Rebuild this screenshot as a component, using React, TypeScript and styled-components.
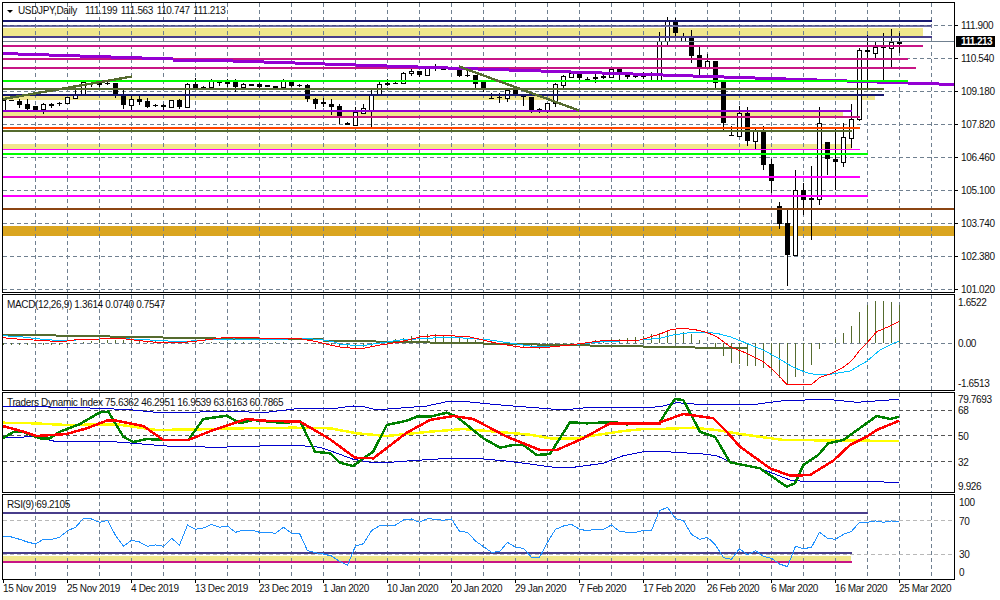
import styled, { createGlobalStyle } from "styled-components";

const GlobalStyle = createGlobalStyle`
    html, body {
        margin: 0;
        background: #fff;
    }
    body {
        font-family: "Liberation Sans", Arial, sans-serif;
        overflow: hidden;
    }
`

const Terminal = styled.div`
    width: 1000px;
    height: 600px;
    padding: 2px 0 0 2px;
    box-sizing: border-box;
    display: flex;
    flex-direction: column;
    gap: 1px;
    background: #fff;
    color: #111;
    font-size: 10px;
    letter-spacing: -0.35px;
    line-height: 12px;
`

const PaneRow = styled.div<{ $height: number }>`
    display: flex;
    height: ${props => props.$height}px;
`

const Plot = styled.div`
    position: relative;
    width: 953px;
    height: 100%;
    box-sizing: border-box;
    border: 1px solid #000;
    flex: none;
    overflow: hidden;

    svg {
        display: block;
    }
`

const PaneTitle = styled.div<{ $top?: number; $left?: number }>`
    position: absolute;
    top: ${props => props.$top ?? 4}px;
    left: ${props => props.$left ?? 4}px;
    display: flex;
    align-items: center;
    white-space: pre;
`

const MenuArrow = styled.span`
    width: 0;
    height: 0;
    margin: 1px 5px 0 1px;
    border-left: 3px solid transparent;
    border-right: 3px solid transparent;
    border-top: 3px solid #000;
`

const SymbolName = styled.span`
    margin-right: 8px;
`

const QuoteValues = styled.span`
    word-spacing: 1.2px;
`

const AxisColumn = styled.div<{ $top: number; $inset: number; $gap?: number }>`
    position: relative;
    flex: 1;
    display: flex;
    flex-direction: column;
    gap: ${props => props.$gap ?? 0}px;
    padding-top: ${props => props.$top}px;
    padding-left: ${props => props.$inset}px;
`

const AxisLabel = styled.div<{ $mt?: number; $tick?: boolean }>`
    position: relative;
    height: 12px;
    flex: none;
    margin-top: ${props => props.$mt ?? 0}px;

    &::before {
        content: "";
        display: ${props => (props.$tick ? "block" : "none")};
        position: absolute;
        left: -6px;
        top: 5px;
        width: 3px;
        height: 1px;
        background: #000;
    }
`

const PriceTag = styled.div`
    position: absolute;
    top: 34px;
    left: 1px;
    width: 34px;
    height: 11px;
    padding-left: 5px;
    background: #000;
    color: #fff;
    line-height: 11px;
    font-weight: 700;
    letter-spacing: -0.6px;
`

const DateAxis = styled.div`
    display: grid;
    grid-template-columns: repeat(15, 64px);
    padding-left: 1px;
    margin-top: -1px;
    height: 20px;
`

const DateCell = styled.div`
    position: relative;
    padding-top: 3px;
    white-space: nowrap;

    &::before {
        content: "";
        position: absolute;
        left: 0;
        top: 0;
        width: 1px;
        height: 3px;
        background: #000;
    }
`

type Pt = [number, number];

const GRID = "#708090";
const NAVY = "#191970";
const SLATE = "#483D8B";
const VIOLET = "#C71585";
const PURPLE = "#9400D3";
const OLIVE = "#556B2F";
const LIME = "#00FF00";
const ORANGE = "#FF4500";
const MAGENTA = "#FF00FF";
const BROWN = "#8B4513";
const GOLD = "#DAA520";
const KHAKI = "#F0E68C";

const vGrid = Array.from({ length: 29 }, (_, i) => 35 + i * 32);

// reads points taken off 3x crops back into page coordinates
const fromCrop = (pts: number[], ox: number, oy: number): Pt[] => {
    const out: Pt[] = [];
    for (let i = 0; i < pts.length; i += 2) out.push([ox + pts[i] / 3, oy + pts[i + 1] / 3]);
    return out;
};

const toPoints = (pts: Pt[]) => pts.map(p => `${p[0].toFixed(1)},${p[1].toFixed(1)}`).join(" ");

const threeCrops = (a: number[], b: number[], c: number[]) => [
    ...fromCrop(a, 0, 390),
    ...fromCrop(b, 330, 390),
    ...fromCrop(c, 660, 390),
];

// high, body top, body bottom, low, up
const candles: [number, number, number, number, number][] = [
    [100, 100, 110, 110, 1], [100, 100, 101, 101, 0], [99, 101, 105, 108, 0], [99, 104, 109, 110, 0],
    [106, 106, 110, 110, 0], [103, 104, 109, 114, 1], [103, 104, 106, 108, 0], [102, 103, 104, 106, 0],
    [97, 97, 103, 104, 1], [90, 95, 98, 99, 1], [82, 82, 94, 94, 1], [82, 83, 84, 87, 0],
    [80, 83, 85, 87, 0], [81, 83, 84, 85, 0], [83, 83, 94, 98, 0], [90, 96, 105, 109, 0],
    [96, 99, 105, 110, 1], [95, 99, 102, 105, 0], [98, 101, 107, 108, 0], [104, 105, 106, 107, 0],
    [104, 105, 107, 110, 0], [100, 100, 107, 107, 1], [99, 100, 107, 109, 0], [83, 84, 107, 107, 1],
    [78, 84, 88, 90, 0], [86, 87, 88, 88, 0], [79, 81, 87, 88, 1], [80, 82, 83, 86, 0],
    [79, 82, 83, 87, 1], [79, 82, 87, 92, 0], [83, 84, 87, 89, 1], [84, 84, 86, 86, 0],
    [83, 84, 87, 89, 0], [85, 85, 87, 87, 0], [86, 86, 88, 88, 0], [79, 81, 87, 87, 1],
    [81, 82, 86, 87, 0], [84, 85, 86, 87, 0], [84, 85, 99, 102, 0], [98, 99, 104, 109, 0],
    [98, 102, 104, 107, 0], [99, 104, 107, 115, 0], [104, 106, 116, 124, 0], [122, 123, 125, 125, 0],
    [107, 112, 125, 126, 1], [104, 108, 113, 114, 1], [90, 94, 110, 127, 1], [82, 84, 94, 95, 1],
    [79, 83, 85, 86, 0], [82, 83, 84, 84, 0], [72, 73, 83, 84, 1], [69, 71, 73, 76, 1],
    [71, 71, 75, 77, 0], [66, 68, 75, 76, 1], [64, 68, 69, 71, 0], [68, 68, 70, 70, 0],
    [67, 68, 69, 69, 0], [70, 70, 76, 77, 0], [71, 75, 76, 77, 0], [75, 75, 84, 88, 0],
    [82, 82, 88, 92, 0], [93, 98, 99, 99, 0], [93, 97, 98, 103, 0], [88, 90, 98, 102, 1],
    [88, 89, 95, 95, 0], [95, 95, 97, 106, 0], [97, 97, 110, 113, 0], [108, 109, 110, 113, 0],
    [103, 103, 111, 113, 1], [83, 84, 103, 107, 1], [75, 76, 85, 88, 1], [72, 73, 77, 77, 1],
    [74, 74, 78, 82, 0], [77, 79, 80, 80, 0], [74, 77, 79, 83, 0], [75, 76, 78, 79, 0],
    [69, 69, 77, 77, 1], [69, 69, 75, 80, 0], [73, 74, 77, 79, 0], [74, 76, 77, 78, 0],
    [72, 76, 77, 79, 0], [72, 75, 76, 80, 0], [32, 41, 80, 82, 1], [17, 21, 41, 45, 1],
    [18, 22, 33, 36, 0], [33, 37, 41, 41, 1], [30, 38, 56, 63, 0], [47, 55, 67, 75, 0],
    [54, 61, 67, 67, 1], [61, 61, 83, 88, 0], [80, 82, 123, 130, 0], [126, 135, 136, 136, 0],
    [106, 113, 136, 137, 1], [107, 113, 141, 146, 0], [129, 131, 141, 150, 1], [126, 132, 165, 170, 0],
    [159, 164, 181, 193, 0], [202, 206, 224, 229, 0], [209, 223, 255, 286, 0], [170, 190, 255, 255, 1],
    [183, 190, 200, 215, 0], [166, 198, 200, 240, 0], [107, 123, 199, 205, 1], [142, 142, 159, 175, 0],
    [127, 159, 162, 190, 0], [123, 137, 162, 167, 1], [104, 119, 138, 148, 1], [48, 50, 119, 121, 1],
    [35, 50, 52, 88, 0], [41, 47, 53, 58, 1], [33, 47, 48, 82, 0], [29, 42, 48, 69, 1],
    [33, 42, 44, 53, 0],
];

// x0, x1, y
const purpleSteps: [number, number, number][] = [
    [3, 18, 53], [18, 49, 54], [49, 80, 55.5], [80, 111, 56.7], [111, 142, 57.3], [142, 173, 58.3],
    [173, 202, 60], [202, 233, 60.7], [233, 264, 61.3], [264, 295, 62.3], [295, 325, 63], [325, 356, 64.3],
    [356, 387, 65.3], [387, 418, 66.3], [418, 448, 67], [448, 478, 68.7], [478, 509, 69.7], [509, 541, 70.7],
    [541, 571, 71.3], [571, 602, 72.3], [602, 633, 73.3], [633, 663, 74.3], [663, 693, 75.3], [693, 724, 76.3],
    [724, 755, 77.3], [755, 786, 78.7], [786, 817, 79.3], [817, 847, 80], [847, 877, 81], [877, 908, 82.3],
    [908, 939, 83.3], [939, 955, 84.3],
];

const MainChart = () => {
    const zone = (y0: number, y1: number, x1: number, color: string) => (
        <rect x={3} y={y0} width={x1 - 3} height={y1 - y0} fill={color} />
    );
    const level = (y: number, x1: number, color: string, w = 2) => (
        <rect x={3} y={y - w / 2} width={x1 - 3} height={w} fill={color} />
    );
    return (
        <svg width={951} height={289} viewBox="3 3 951 289" shapeRendering="crispEdges">
            {zone(28, 36, 923, KHAKI)}
            {zone(96, 100, 875, KHAKI)}
            {zone(112, 116, 843, KHAKI)}
            {zone(144, 149, 852, KHAKI)}
            {zone(226, 236, 955, GOLD)}
            {vGrid.map(x => (
                <line key={x} x1={x + 0.5} x2={x + 0.5} y1={3} y2={292} stroke={GRID} strokeDasharray="4 3" />
            ))}
            {[25, 58, 91, 124, 157, 190, 223, 256, 289].map(y => (
                <line key={y} x1={3} x2={955} y1={y + 0.5} y2={y + 0.5} stroke={GRID} strokeDasharray="4 3" />
            ))}
            {candles.map(([high, top, bot, low, up], k) => {
                const x = 3 + k * 8;
                return (
                    <g key={k}>
                        <rect x={x} y={high} width={1} height={low - high} fill="#000" />
                        {up ? (
                            <rect x={x - 1.5} y={top + 0.5} width={4} height={bot - top} fill="#fff" stroke="#000" />
                        ) : (
                            <rect x={x - 2} y={top} width={5} height={Math.max(bot - top, 1)} fill="#000" />
                        )}
                    </g>
                );
            })}
            {level(21, 932, NAVY)}
            {level(26, 932, "#6f6f9f")}
            <line x1={3} x2={932} y1={25.5} y2={25.5} stroke="#4b4b8b" strokeDasharray="4 3" />
            {level(37, 932, SLATE)}
            {level(41.5, 955, GRID, 1)}
            {level(46, 923, VIOLET)}
            {level(59, 908, VIOLET)}
            {level(68, 916, VIOLET)}
            {purpleSteps.map(([x0, x1, y]) => (
                <rect key={x0} x={x0} y={y - 1.5} width={x1 - x0} height={3} fill={PURPLE} />
            ))}
            {level(81, 908, LIME)}
            {level(89, 884, OLIVE)}
            {level(95, 884, NAVY)}
            {level(111, 852, PURPLE)}
            {level(117, 860, VIOLET)}
            {level(128, 860, ORANGE)}
            {level(131, 852, OLIVE)}
            {level(149.5, 860, MAGENTA, 1)}
            {level(154, 868, LIME)}
            {level(177, 860, MAGENTA)}
            {level(196, 868, MAGENTA)}
            {level(209, 955, BROWN)}
            <line x1={3} y1={99} x2={132} y2={76.5} stroke={OLIVE} strokeWidth={2.4} />
            <line x1={459} y1={66.5} x2={579} y2={110.5} stroke={OLIVE} strokeWidth={2.4} />
        </svg>
    );
};

// height of each bar above the zero line, bar by bar up to the 17 Feb candle
const histLeft = [
    -2, -2, -2, -2, -2, -2, -2, -2, -2, -1, 1, 2, 3, 3, 3, 3, 3, 2, 2, 2, 2,
    2, 2, 2, 2, 1, 1, 1, 1, 1, 1, 1, 1, 1, 1, 1, 0, -1, -1, -1, -2, -2, -3, -4, -5, -4, -3, -1,
    2, 4, 5, 7, 8, 9, 9, 8, 7, 6, 5, 3, 2, 1, 0, -1, -2, -4, -5, -6, -5, -3, -2, -1, 0,
    1, 3, 3, 4, 4, 5, 6, 7, 9, 10,
];
const histRight = [
    122, 122, 125, 133, 150, 160, 170, 198, 218, 222, 228, 228, 235, 245, 265, 283, 260, 245, 224, 177,
    160, 147, 128, 107, 66, 44, 33, 34, 35, 44,
];

const macdRed: Pt[] = [
    ...fromCrop([8, 143, 50, 147, 100, 150, 150, 153, 200, 153, 240, 148, 300, 147, 360, 145, 420, 152, 480, 158, 540, 158, 600, 152, 670, 143, 760, 143, 820, 146, 900, 146, 950, 155, 990, 165], 0, 290),
    [340, 347], [360, 349], [380, 345], [400, 342], [420, 337], [440, 335], [470, 337], [500, 344], [520, 347], [540, 348], [570, 345], [600, 341], [640, 340],
    ...fromCrop([0, 132, 30, 120, 60, 115, 100, 118, 140, 127, 170, 140, 210, 170, 260, 190, 310, 215, 340, 240, 380, 283, 455, 283, 480, 262, 510, 252, 550, 232, 575, 212, 600, 180, 620, 160, 650, 125, 690, 108, 718, 94], 660, 290),
];
const macdBlue: Pt[] = [
    ...fromCrop([8, 137, 60, 140, 120, 147, 180, 152, 230, 150, 300, 147, 350, 145, 450, 150, 540, 155, 620, 150, 700, 147, 800, 148, 930, 146, 970, 150, 1000, 155], 0, 290),
    [340, 344], [360, 346], [400, 340], [450, 337], [490, 340], [530, 346], [560, 346], [600, 342], [640, 340],
    ...fromCrop([0, 145, 40, 135, 80, 129, 120, 126, 170, 130, 210, 140, 260, 160, 310, 180, 360, 208, 400, 232, 440, 248, 470, 254, 510, 253, 570, 243, 620, 214, 660, 180, 700, 160, 718, 153], 660, 290),
];
const macdOlive: [number, number, number][] = [
    [3, 56, 334.7], [56, 110, 336], [110, 163, 337], [163, 216, 338], [216, 270, 339], [270, 323, 339.3],
    [323, 376, 340.7], [376, 430, 342], [430, 483, 343], [483, 537, 344], [537, 590, 344.7], [590, 643, 345.5],
    [643, 695, 346.7], [695, 747, 348],
];

const MacdChart = () => (
    <svg width={951} height={95} viewBox="3 295 951 95" shapeRendering="crispEdges">
        {vGrid.map(x => (
            <line key={x} x1={x + 0.5} x2={x + 0.5} y1={295} y2={390} stroke={GRID} strokeDasharray="4 3" />
        ))}
        <line x1={3} x2={955} y1={343.5} y2={343.5} stroke={GRID} strokeDasharray="4 3" />
        {histLeft.map((h, k) => (
            <rect key={k} x={3 + k * 8} y={h > 0 ? 343 - h : 343} width={1} height={Math.abs(h)} fill={OLIVE} />
        ))}
        {histRight.map((z, i) => {
            const y = 290 + z / 3;
            return <rect key={i} x={667 + i * 8} y={Math.min(y, 343)} width={1} height={Math.abs(y - 343)} fill={OLIVE} />;
        })}
        {macdOlive.map(([x0, x1, y]) => (
            <rect key={x0} x={x0} y={y - 1} width={x1 - x0} height={2} fill={OLIVE} />
        ))}
        <polyline points={toPoints(macdBlue)} fill="none" stroke="#00BFFF" />
        <polyline points={toPoints(macdRed)} fill="none" stroke="#FF0000" />
    </svg>
);

const tdiBlueTop = threeCrops(
    [8, 50, 100, 50, 200, 52, 300, 55, 400, 60, 480, 68, 580, 68, 620, 64, 800, 67, 900, 55, 950, 55],
    [0, 57, 70, 48, 100, 50, 140, 60, 200, 55, 290, 48, 360, 33, 420, 36, 500, 44, 600, 52, 700, 60, 780, 52, 940, 53],
    [0, 50, 50, 38, 130, 44, 270, 45, 370, 32, 500, 28, 590, 37, 718, 28],
);
const tdiBlueLow = threeCrops(
    [8, 143, 100, 140, 170, 155, 340, 155, 500, 168, 650, 172, 880, 165, 960, 172],
    [0, 182, 70, 208, 130, 218, 180, 217, 260, 211, 360, 205, 450, 206, 520, 212, 600, 222, 680, 233, 730, 232, 820, 220, 880, 197, 940, 185],
    [0, 184, 130, 192, 170, 197, 210, 215, 300, 235, 390, 270, 430, 274, 650, 275, 718, 278],
);
const tdiYellow = threeCrops(
    [8, 98, 100, 100, 200, 105, 350, 103, 470, 120, 600, 118, 720, 115, 880, 113],
    [0, 115, 80, 130, 170, 138, 300, 125, 400, 117, 500, 125, 600, 134, 660, 145, 740, 145, 800, 135, 880, 123, 940, 117],
    [0, 117, 100, 113, 170, 120, 240, 132, 370, 150, 718, 153],
);
const tdiGreen = threeCrops(
    [8, 145, 40, 126, 70, 126, 120, 145, 150, 145, 180, 125, 240, 102, 300, 67, 325, 65, 370, 140, 400, 156, 440, 147, 490, 150, 565, 150, 610, 87, 680, 77, 720, 100, 760, 90, 830, 97, 860, 98, 900, 93, 945, 185],
    [0, 190, 30, 218, 70, 228, 100, 205, 130, 185, 170, 105, 230, 92, 260, 80, 300, 80, 350, 68, 380, 80, 460, 145, 510, 173, 550, 165, 580, 165, 620, 195, 660, 192, 720, 97, 770, 100, 850, 96, 890, 103, 990, 100],
    [0, 95, 44, 27, 70, 30, 120, 125, 165, 140, 210, 217, 300, 235, 380, 290, 405, 280, 430, 225, 475, 195, 505, 160, 550, 150, 650, 78, 690, 87, 718, 80],
);
const tdiRed = threeCrops(
    [8, 108, 60, 122, 110, 138, 200, 132, 260, 115, 320, 92, 350, 92, 430, 108, 490, 150, 565, 150, 640, 120, 740, 87, 790, 92, 900, 95, 960, 130],
    [0, 148, 75, 203, 130, 205, 230, 128, 300, 90, 370, 78, 430, 87, 530, 140, 630, 180, 680, 180, 760, 145, 840, 100, 990, 100],
    [0, 97, 70, 72, 160, 85, 200, 125, 240, 170, 330, 235, 390, 257, 450, 255, 520, 212, 570, 165, 620, 140, 650, 120, 718, 92],
);

const TdiChart = () => (
    <svg width={951} height={99} viewBox="3 393 951 99" shapeRendering="crispEdges">
        {vGrid.map(x => (
            <line key={x} x1={x + 0.5} x2={x + 0.5} y1={393} y2={492} stroke={GRID} strokeDasharray="4 3" />
        ))}
        {[410, 435, 461].map(y => (
            <line key={y} x1={3} x2={955} y1={y + 0.5} y2={y + 0.5} stroke="#555" strokeDasharray="4 3" />
        ))}
        <polyline points={toPoints(tdiBlueTop)} fill="none" stroke="#0000CD" />
        <polyline points={toPoints(tdiBlueLow)} fill="none" stroke="#0000CD" />
        <polyline points={toPoints(tdiYellow)} fill="none" stroke="#FFFF00" strokeWidth={2.5} />
        <polyline points={toPoints(tdiGreen)} fill="none" stroke="#008000" strokeWidth={2.5} />
        <polyline points={toPoints(tdiRed)} fill="none" stroke="#FF0000" strokeWidth={2.5} />
    </svg>
);

// RSI readings as rows of the 3x crop, one per candle
const rsiRows = [
    139, 141, 148, 156, 162, 148, 148, 142, 122, 112, 85, 87, 97, 91, 136, 169, 151, 156, 169, 165, 169,
    145, 165, 105, 118, 114, 103, 112, 108, 127, 120, 120, 127, 127, 130, 112, 130, 130, 182, 188, 192,
    198, 214, 226, 168, 161, 122, 107, 105, 105, 90, 87, 97, 86, 88, 91, 87, 124, 127, 153, 170, 187,
    185, 157, 172, 175, 202, 202, 157, 118, 108, 103, 118, 122, 118, 118, 105, 124, 127, 127, 121, 121,
    62, 52, 86, 92, 133, 148, 142, 165, 203, 208, 176, 194, 182, 199, 205, 222, 230, 169, 176, 172, 127,
    145, 148, 133, 124, 97, 97, 93, 97, 93, 94,
];

const RsiChart = () => {
    const level = (y: number, x1: number, color: string, h = 2) => (
        <rect x={3} y={y} width={x1 - 3} height={h} fill={color} />
    );
    return (
        <svg width={951} height={84} viewBox="3 495 951 84" shapeRendering="crispEdges">
            {level(556, 851, KHAKI, 4.5)}
            {vGrid.map(x => (
                <line key={x} x1={x + 0.5} x2={x + 0.5} y1={495} y2={579} stroke={GRID} strokeDasharray="4 3" />
            ))}
            <line x1={3} x2={955} y1={520.5} y2={520.5} stroke="#b8b8b8" strokeDasharray="4 3" />
            <line x1={3} x2={955} y1={554.5} y2={554.5} stroke="#b8b8b8" strokeDasharray="4 3" />
            {level(512, 868, SLATE)}
            {level(552, 852, SLATE)}
            {level(561, 852, VIOLET)}
            <polyline
                points={toPoints(rsiRows.map((z, k): Pt => [3.5 + k * 8, 490 + z / 3]))}
                fill="none"
                stroke="#1E90FF"
            />
        </svg>
    );
};

const mainPrices = ["111.900", "110.540", "109.180", "107.820", "106.460", "105.100", "103.740", "102.380", "101.020"];
const dates = [
    "15 Nov 2019", "25 Nov 2019", "4 Dec 2019", "13 Dec 2019", "23 Dec 2019", "1 Jan 2020", "10 Jan 2020", "20 Jan 2020",
    "29 Jan 2020", "7 Feb 2020", "17 Feb 2020", "26 Feb 2020", "6 Mar 2020", "16 Mar 2020", "25 Mar 2020",
];

export default function App() {
    return (
        <Terminal>
            <GlobalStyle />
            <PaneRow $height={291}>
                <Plot>
                    <MainChart />
                    <PaneTitle $top={2} $left={3}>
                        <MenuArrow />
                        <SymbolName>USDJPY,Daily</SymbolName>
                        <QuoteValues>111.199 111.563 110.747 111.213</QuoteValues>
                    </PaneTitle>
                </Plot>
                <AxisColumn $top={18} $inset={6} $gap={21}>
                    {mainPrices.map(p => (
                        <AxisLabel key={p} $tick>{p}</AxisLabel>
                    ))}
                    <PriceTag>111.213</PriceTag>
                </AxisColumn>
            </PaneRow>
            <PaneRow $height={97}>
                <Plot>
                    <MacdChart />
                    <PaneTitle>MACD(12,26,9) 1.3614 0.0740 0.7547</PaneTitle>
                </Plot>
                <AxisColumn $top={3} $inset={3}>
                    <AxisLabel>1.6522</AxisLabel>
                    <AxisLabel $mt={29}>0.00</AxisLabel>
                    <AxisLabel $mt={28}>-1.6513</AxisLabel>
                </AxisColumn>
            </PaneRow>
            <PaneRow $height={101}>
                <Plot>
                    <TdiChart />
                    <PaneTitle>Traders Dynamic Index 75.6362 46.2951 16.9539 63.6163 60.7865</PaneTitle>
                </Plot>
                <AxisColumn $top={2} $inset={3}>
                    <AxisLabel>79.7693</AxisLabel>
                    <AxisLabel $mt={-1}>68</AxisLabel>
                    <AxisLabel $mt={14}>50</AxisLabel>
                    <AxisLabel $mt={14}>32</AxisLabel>
                    <AxisLabel $mt={12}>9.926</AxisLabel>
                </AxisColumn>
            </PaneRow>
            <PaneRow $height={86}>
                <Plot>
                    <RsiChart />
                    <PaneTitle>RSI(9) 69.2105</PaneTitle>
                </Plot>
                <AxisColumn $top={3} $inset={4}>
                    <AxisLabel>100</AxisLabel>
                    <AxisLabel $mt={7}>70</AxisLabel>
                    <AxisLabel $mt={21}>30</AxisLabel>
                    <AxisLabel $mt={6}>0</AxisLabel>
                </AxisColumn>
            </PaneRow>
            <DateAxis>
                {dates.map(d => (
                    <DateCell key={d}>{d}</DateCell>
                ))}
            </DateAxis>
        </Terminal>
    );
}
